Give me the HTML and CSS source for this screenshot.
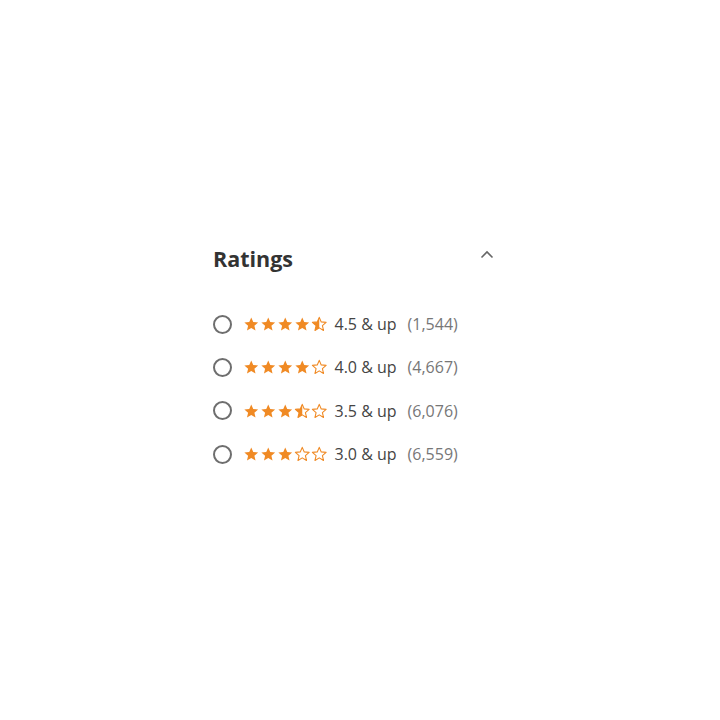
FILE: index.html
```html
<!DOCTYPE html>
<html lang="en">
<head>
    <meta charset="UTF-8">
    <title>Ratings filter</title>
    <link rel="stylesheet" href="styles.css">
</head>
<body>
    <svg width="0" height="0" class="defs">
        <defs>
            <polygon id="star-shape" points="12,2 14.9,8.6 22,9.3 16.6,14 18.2,21 12,17.3 5.8,21 7.4,14 2,9.3 9.1,8.6"/>
            <clipPath id="left-half"><rect x="0" y="0" width="12" height="24"/></clipPath>
        </defs>
    </svg>

    <div class="filter-panel">
        <div class="filter-header">
            <h2>Ratings</h2>
            <svg class="chevron" width="14" height="10" viewBox="0 0 14 10">
                <polyline points="1.5,7.5 7,2 12.5,7.5" fill="none" stroke="#666" stroke-width="1.6"/>
            </svg>
        </div>

        <ul class="rating-list" id="rating-list"></ul>
    </div>

    <script>
        const ratings = [
            { value: 4.5, count: '1,544' },
            { value: 4.0, count: '4,667' },
            { value: 3.5, count: '6,076' },
            { value: 3.0, count: '6,559' }
        ];

        function starSvg(kind) {
            // kind: full, half or empty
            let inner = '';
            if (kind === 'full') {
                inner = '<use href="#star-shape" class="star-fill"/>';
            } else if (kind === 'half') {
                inner = '<use href="#star-shape" class="star-line"/>' +
                        '<use href="#star-shape" class="star-fill" clip-path="url(#left-half)"/>';
            } else {
                inner = '<use href="#star-shape" class="star-line"/>';
            }
            return '<svg class="star" viewBox="0 0 24 24">' + inner + '</svg>';
        }

        const list = document.getElementById('rating-list');
        ratings.forEach(r => {
            let stars = '';
            for (let i = 1; i <= 5; i++) {
                if (r.value >= i) stars += starSvg('full');
                else if (r.value >= i - 0.5) stars += starSvg('half');
                else stars += starSvg('empty');
            }
            const li = document.createElement('li');
            li.className = 'rating-row';
            li.innerHTML =
                '<span class="radio"></span>' +
                '<span class="stars">' + stars + '</span>' +
                '<span class="rating-label">' + r.value.toFixed(1) + ' &amp; up</span>' +
                '<span class="rating-count">(' + r.count + ')</span>';
            list.appendChild(li);
        });
    </script>
</body>
</html>
```

FILE: styles.css
```css
body {
    margin: 0;
    background-color: #ffffff;
    font-family: "Open Sans", "Noto Sans", sans-serif;
    color: #333;
}
.defs {
    position: absolute;
}
.filter-panel {
    width: 284px;
    margin: 244px 0 0 213px;
}
.filter-header {
    display: flex;
    justify-content: space-between;
    align-items: flex-start;
}
.filter-header h2 {
    margin: 0;
    font-size: 21.5px;
    font-weight: 700;
    color: #333;
    line-height: 30px;
}
.chevron {
    margin: 6px 3px 0 0;
}
.rating-list {
    list-style: none;
    margin: 38px 0 0 0;
    padding: 0;
    display: flex;
    flex-direction: column;
    gap: 19.4px;
}
.rating-row {
    display: flex;
    align-items: center;
    height: 24px;
}
.radio {
    width: 15px;
    height: 15px;
    border: 2px solid #6e6e6e;
    border-radius: 50%;
    margin-right: 11px;
}
.stars {
    display: flex;
    gap: 0.5px;
    margin-right: 7px;
}
.star {
    width: 16.5px;
    height: 16.5px;
}
.star-fill {
    fill: #f08a24;
}
.star-line {
    fill: none;
    stroke: #f08a24;
    stroke-width: 1.6;
    stroke-linejoin: round;
}
.rating-label {
    font-size: 16px;
    color: #444;
    margin-right: 11px;
}
.rating-count {
    font-size: 16px;
    color: #777;
}
```
